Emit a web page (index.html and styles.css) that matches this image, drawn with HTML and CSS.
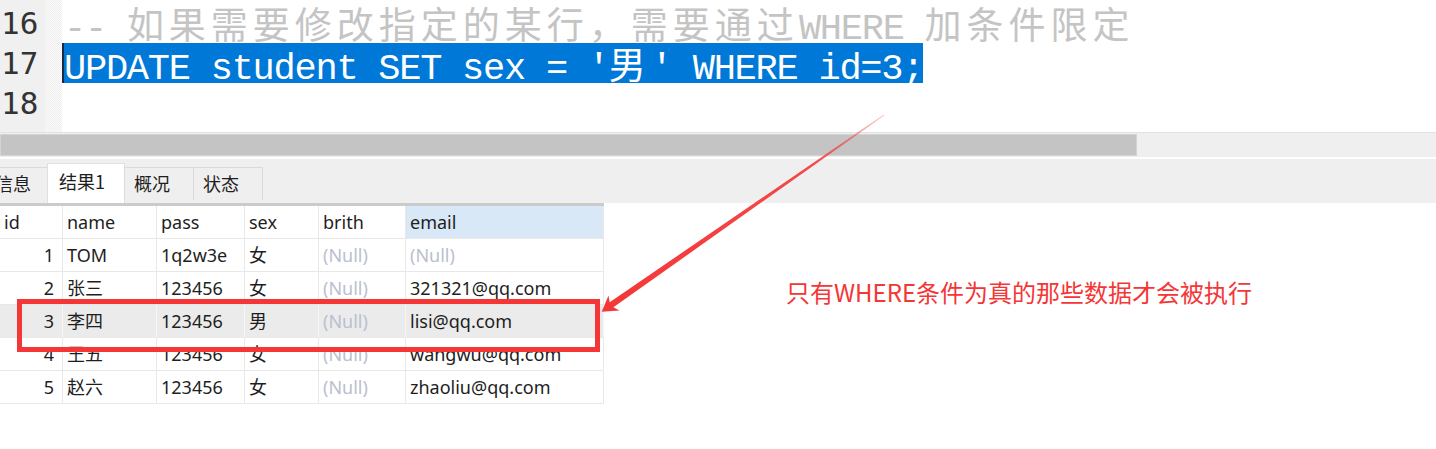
FILE: index.html
```html
<!DOCTYPE html>
<html lang="zh-CN">
<head>
<meta charset="utf-8">
<title>UPDATE student</title>
<link rel="stylesheet" href="styles.css">
</head>
<body>
<div class="page">
  <div class="editor">
    <div class="gutter">
      <div class="nums">
        <div class="ln">16</div>
        <div class="ln">17</div>
        <div class="ln">18</div>
      </div>
      <div class="hatch"></div>
    </div>
    <div class="code">
      <div class="line comment">-- <span class="cj">如果需要修改指定的某行，需要通过</span>WHERE <span class="cj">加条件限定</span></div>
      <div class="line"><span class="sel">UPDATE student SET sex = '<span class="cj">男</span>' WHERE id=3;</span></div>
      <div class="line"></div>
    </div>
  </div>
  <div class="hscroll"><div class="thumb"></div></div>
  <div class="tabbar">
    <div class="tab first">信息</div>
    <div class="tab active">结果1</div>
    <div class="tab">概况</div>
    <div class="tab">状态</div>
  </div>
  <div class="grid">
    <div class="c h">id</div><div class="c h">name</div><div class="c h">pass</div><div class="c h">sex</div><div class="c h">brith</div><div class="c h hl">email</div>

    <div class="c num">1</div><div class="c">TOM</div><div class="c">1q2w3e</div><div class="c">女</div><div class="c null">(Null)</div><div class="c null">(Null)</div>

    <div class="c num">2</div><div class="c">张三</div><div class="c">123456</div><div class="c">女</div><div class="c null">(Null)</div><div class="c">321321@qq.com</div>

    <div class="c num s">3</div><div class="c s">李四</div><div class="c s">123456</div><div class="c s">男</div><div class="c null s">(Null)</div><div class="c s">lisi@qq.com</div>

    <div class="c num">4</div><div class="c">王五</div><div class="c">123456</div><div class="c">女</div><div class="c null">(Null)</div><div class="c">wangwu@qq.com</div>

    <div class="c num">5</div><div class="c">赵六</div><div class="c">123456</div><div class="c">女</div><div class="c null">(Null)</div><div class="c">zhaoliu@qq.com</div>
  </div>

  <div class="redbox"></div>
  <svg class="arrow" width="1436" height="449" viewBox="0 0 1436 449" aria-hidden="true">
    <defs>
      <linearGradient id="fade" x1="884" y1="115" x2="602" y2="312" gradientUnits="userSpaceOnUse">
        <stop offset="0" stop-color="#f43636" stop-opacity="0.25"/>
        <stop offset="0.25" stop-color="#f43636" stop-opacity="0.9"/>
        <stop offset="1" stop-color="#f43636"/>
      </linearGradient>
    </defs>
    <polygon fill="url(#fade)" points="601.7,311.7 619.5,310.6 613.4,307.3 884.3,115.4 883.7,114.6 609.7,302.2 608.5,295.6"/>
  </svg>
  <div class="note">只有WHERE条件为真的那些数据才会被执行</div>
</div>
</body>
</html>
```
FILE: styles.css
```css
* { box-sizing: border-box; }
html, body { margin: 0; padding: 0; background: #fff; }
body { width: 1436px; height: 449px; overflow: hidden; }
.page { position: relative; width: 1436px; height: 449px; }

.editor { display: flex; height: 132px; background: #fff; }
.gutter { display: flex; width: 62px; flex: none; }
.nums { width: 45px; background: #f0f0f0; padding-top: 3px; }
.ln {
  height: 40px; line-height: 40px; padding-left: 1px;
  font-family: "DejaVu Sans Mono", monospace; font-size: 31px; color: #333;
}
.hatch {
  width: 17px;
  background-color: #f7f7f7;
  background-image: repeating-conic-gradient(#eeeeee 0 25%, #fbfbfb 0 50%);
  background-size: 2px 2px;
}
.code { flex: 1; padding-top: 3px; padding-left: 2px; }
.line {
  height: 40px; line-height: 40px; white-space: pre;
  font-family: "Liberation Mono", "Noto Sans CJK SC", monospace;
  font-size: 37px; letter-spacing: -1.25px; color: #111;
}
.cj {
  font-family: "Noto Sans CJK SC", sans-serif;
  font-size: 37px; letter-spacing: 5px;
}
.comment { color: #c4c4c4; }
.sel {
  display: inline-block; height: 40px; vertical-align: top;
  background: #0078d7; color: #fff;
  border-left: 2px solid #1b2a4a;
  margin-left: -2px;
}

.hscroll {
  height: 25px; background: #efefef; border-top: 1px solid #e2e2e2;
  padding-top: 1px;
}
.thumb { width: 1137px; height: 22px; background: #c4c4c4; border: 1px solid #d4d4d4; }

.tabbar {
  margin-top: 2px; height: 44px; background: #efefef;
  display: flex; align-items: flex-end;
  font-family: "Noto Sans CJK SC", sans-serif; font-size: 18px; color: #1e1e1e;
}
.tab {
  height: 33px; margin-bottom: 3px; padding: 0 0 2px 9px;
  border: 1px solid #dadada; border-bottom: none; margin-left: -1px;
  display: flex; align-items: center;
  width: 70px;
}
.tab.first { margin-left: -24px; width: 72px; padding-left: 18px; }
.tab.active {
  height: 40px; margin-bottom: 0; background: #fff; width: 78px;
  align-items: flex-start; padding-top: 4px; padding-left: 11px;
  border-color: #e0e0e0;
}

.grid {
  border-top: 3px solid #cbcbcb;
  display: grid;
  grid-template-columns: 63px 94px 88px 74px 87px 198px;
  grid-auto-rows: 33px;
  width: 604px;
  font-family: "Noto Sans", "Noto Sans CJK SC", sans-serif; font-size: 18px; color: #1e1e1e;
}
.c {
  border-right: 1px solid #e8e8e8; border-bottom: 1px solid #e8e8e8;
  padding-left: 4px; line-height: 32px; white-space: nowrap; overflow: hidden;
}
.c.h { background: #fff; }
.c.hl { background: #d9e8f6; }
.num { text-align: right; padding-right: 8px; }
.null { color: #b9c0cf; }
.s { background: #ebebeb; border-right-color: #f6f6f6; }

.redbox {
  position: absolute; left: 17px; top: 299px; width: 583px; height: 53px;
  border: 5px solid #f43636;
}
.arrow { position: absolute; left: 0; top: 0; pointer-events: none; }
.note {
  position: absolute; left: 786px; top: 274px;
  font-family: "Noto Sans CJK SC", sans-serif; font-size: 24px; color: #f43636;
  white-space: nowrap;
}
```
